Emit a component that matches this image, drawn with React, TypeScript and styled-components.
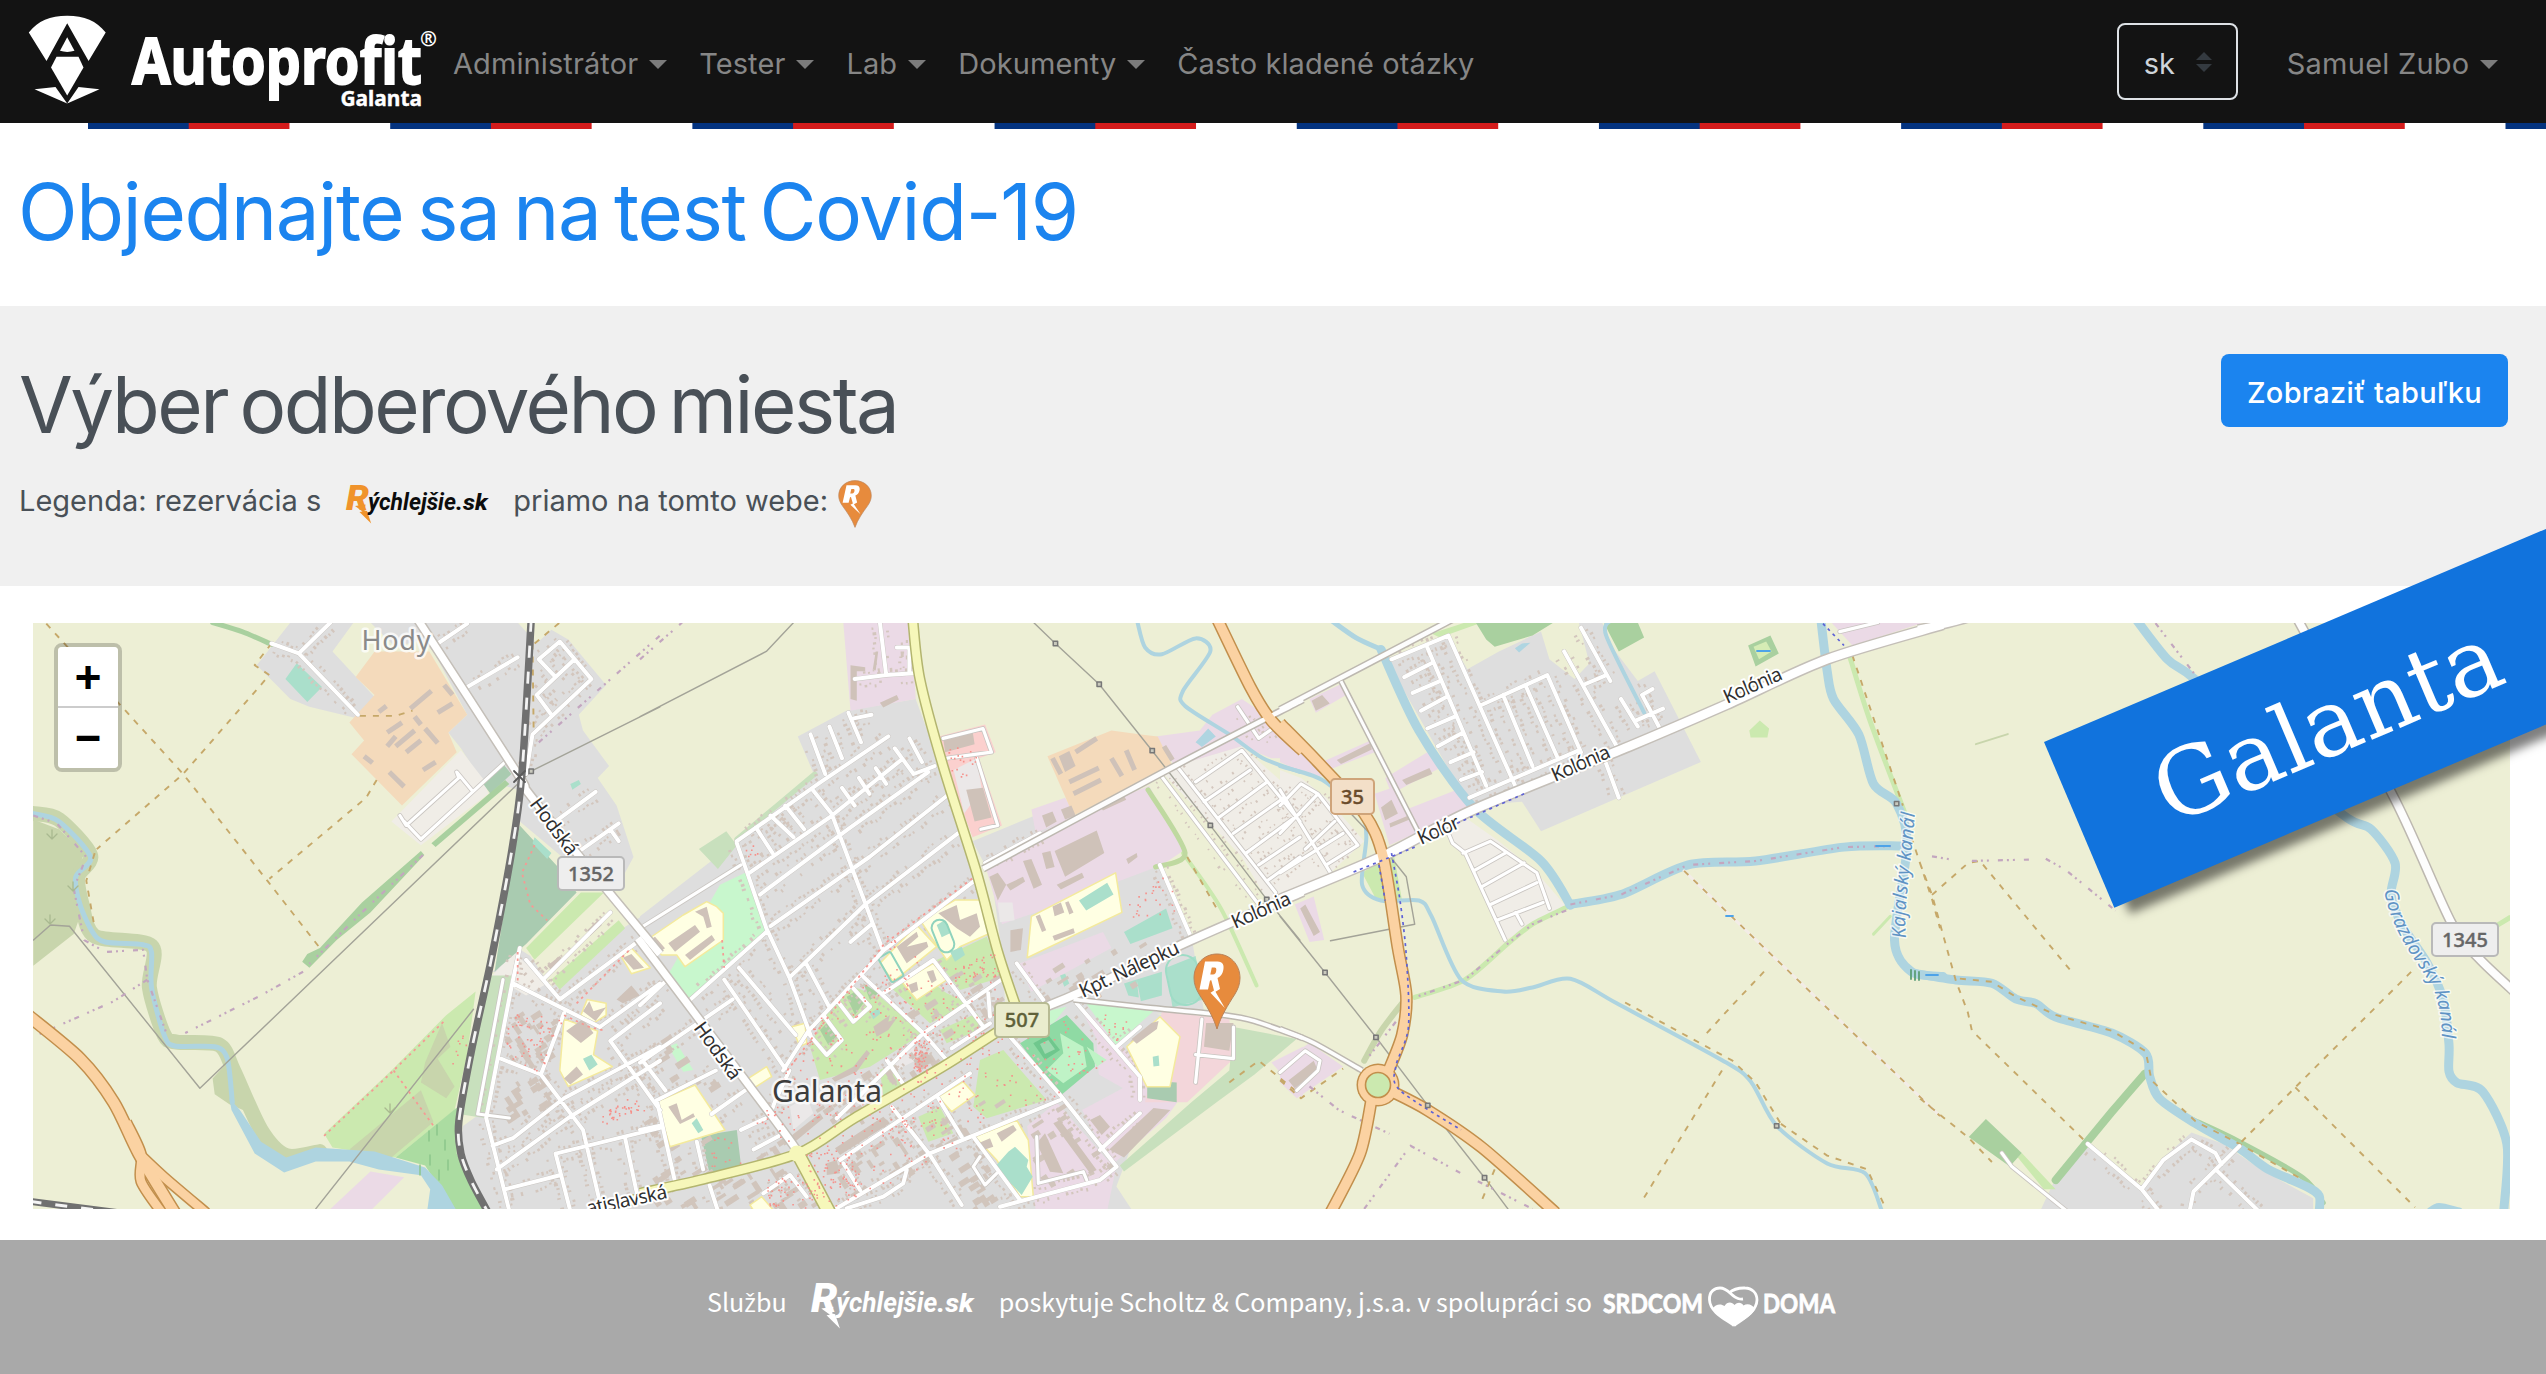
import React from "react";
import styled, { createGlobalStyle } from "styled-components";

/* ------------------------------------------------------------------ */
/* Map geometry: each survey sheet has its own origin and scale        */
/* ------------------------------------------------------------------ */

type Sheet = "A" | "B" | "C" | "D" | "E";
type Pt = [number, number];
type Shape = [Sheet, string];

const SHEETS: Record<Sheet, [number, number, number, number]> = {
  A: [0, 600, 2.3758, 2.529],
  B: [640, 600, 2.3758, 2.529],
  C: [1280, 600, 2.3758, 2.529],
  D: [1920, 510, 2.5048, 2.2085],
  E: [640, 900, 3, 3],
};

const pts = ([sheet, data]: Shape): Pt[] => {
  const [ox, oy, sx, sy] = SHEETS[sheet];
  return data.split(" ").map((pair) => {
    const [x, y] = pair.split(",").map(Number);
    return [ox + x / sx, oy + y / sy] as Pt;
  });
};

const f = (n: number) => n.toFixed(1);
const poly = (s: Shape) => "M" + pts(s).map(([x, y]) => `${f(x)} ${f(y)}`).join("L");
const area = (s: Shape) => poly(s) + "Z";

const curve = (s: Shape) => {
  const p = pts(s);
  let d = `M${f(p[0][0])} ${f(p[0][1])}`;
  for (let i = 0; i < p.length - 1; i++) {
    const a = p[i - 1] ?? p[i];
    const b = p[i];
    const c = p[i + 1];
    const e = p[i + 2] ?? c;
    d += `C${f(b[0] + (c[0] - a[0]) / 7)} ${f(b[1] + (c[1] - a[1]) / 7)} ${f(c[0] - (e[0] - b[0]) / 7)} ${f(
      c[1] - (e[1] - b[1]) / 7,
    )} ${f(c[0])} ${f(c[1])}`;
  }
  return d;
};

const random = (seed: number) => () => {
  seed = (seed * 1664525 + 1013904223) % 4294967296;
  return seed / 4294967296;
};

/* small houses on both sides of a street */
const housesAlong = (streets: Shape[], size: number, skip: number) => {
  const rnd = random(7);
  let d = "";
  streets.forEach((street) => {
    const p = pts(street);
    for (let i = 0; i < p.length - 1; i++) {
      const dx = p[i + 1][0] - p[i][0];
      const dy = p[i + 1][1] - p[i][1];
      const len = Math.hypot(dx, dy);
      const ux = dx / len;
      const uy = dy / len;
      for (let t = 4; t < len - 3; t += 5) {
        [-1, 1].forEach((side) => {
          if (rnd() < skip) return;
          const off = side * (4.5 + rnd() * 4);
          const w = size * (1.7 + rnd() * 1.4);
          const h = size * (1.8 + rnd() * 2.6);
          const x = p[i][0] + ux * t - uy * off;
          const y = p[i][1] + uy * t + ux * off;
          d += `M${f(x)} ${f(y)}l${f(ux * w)} ${f(uy * w)}l${f(-uy * h)} ${f(ux * h)}l${f(-ux * w)} ${f(-uy * w)}z`;
        });
      }
    }
  });
  return d;
};

const inside = ([x, y]: Pt, ring: Pt[]) => {
  let hit = false;
  for (let i = 0, j = ring.length - 1; i < ring.length; j = i++) {
    const [xi, yi] = ring[i];
    const [xj, yj] = ring[j];
    if (yi > y !== yj > y && x < ((xj - xi) * (y - yi)) / (yj - yi) + xi) hit = !hit;
  }
  return hit;
};

/* random marks spread over an area */
const scatter = (s: Shape, count: number, seed: number, mark: (x: number, y: number, r: () => number) => string) => {
  const ring = pts(s);
  const rnd = random(seed);
  const xs = ring.map((q) => q[0]);
  const ys = ring.map((q) => q[1]);
  const x0 = Math.min(...xs);
  const y0 = Math.min(...ys);
  const w = Math.max(...xs) - x0;
  const h = Math.max(...ys) - y0;
  let d = "";
  for (let i = 0; i < count; i++) {
    const x = x0 + rnd() * w;
    const y = y0 + rnd() * h;
    if (inside([x, y], ring)) d += mark(x, y, rnd);
  }
  return d;
};

const dot = (x: number, y: number) => `M${f(x)} ${f(y)}h1.6v1.6h-1.6z`;
const block = (x: number, y: number, r: () => number) => {
  const w = 5 + r() * 10;
  const h = 3 + r() * 4;
  const flip = r() < 0.35;
  const c = flip ? 0.55 : 0.84;
  const s = flip ? 0.84 : -0.54;
  return `M${f(x)} ${f(y)}l${f(w * c)} ${f(w * s)}l${f(-h * s)} ${f(h * c)}l${f(-w * c)} ${f(-w * s)}z`;
};

const RESIDENTIAL: Shape[] = [
  ["A", "610,165 690,57 840,57 790,130 890,245 850,300 735,270 690,250"],
  ["A", "880,57 1230,57 1275,110 1310,75 1350,100 1440,215 1375,290 1385,330 1447,420 1420,450 1465,520 1505,650 1480,700 1370,680 1235,560 1230,480 1140,450 1095,375 1065,335 1110,290 1030,130 1000,100 940,120"],
  ["A", "1170,940 1230,880 1260,900 1310,980 1480,830 1568,770 1575,1545 1160,1545 1090,1400 1100,1330 1140,1300 1150,1250 1210,950"],
  ["B", "0,860 0,800 230,610 415,445 375,345 490,280 655,250 720,440 800,700 860,900 870,1060 1170,1545 0,1545"],
  ["B", "790,610 950,540 1000,530 1030,560 820,670"],
  ["B", "840,740 1150,680 1240,670 1310,850 1340,1040 1000,1060 880,1040"],
  ["B", "870,1080 1050,1010 1290,1060 1300,1250 1200,1290 1110,1545 500,1545"],
  ["C", "255,155 400,90 445,175 520,130 620,80 640,150 700,200 735,160 710,57 765,57 790,120 850,205 890,180 1000,410 620,585 575,510 450,520"],
  ["D", "340,1475 430,1400 555,1500 610,1430 680,1375 760,1400 860,1460 985,1520 985,1550 300,1550"],
];

const AREAS: [string, Shape[]][] = [
  ["#f0ede7", [
    ["C", "400,600 410,560 440,550 520,610 610,690 680,775 535,860 440,650"],
    ["B", "1235,430 1430,370 1568,500 1575,740 1490,760 1430,650"],
    ["C", "0,430 50,450 110,500 200,610 120,690 0,750"],
    ["A", "930,560 1095,380 1150,455 1160,490 1000,620"],
    ["A", "1170,950 1220,890 1300,970 1250,1000"],
  ]],
  ["#ebdae6", [
    ["B", "483,57 645,57 655,250 500,280"],
    ["B", "820,670 1000,560 1210,470 1290,635 1240,670 940,790 860,820"],
    ["B", "930,530 1010,500 1035,545 940,590"],
    ["B", "1225,345 1330,330 1360,290 1430,250 1568,350 1575,400 1500,400 1430,370 1270,420"],
    ["B", "900,920 1100,840 1120,880 930,990"],
    ["C", "0,340 60,380 130,450 60,440 0,410"],
    ["C", "70,250 150,210 165,235 85,285"],
    ["C", "100,410 215,355 225,385 115,430"],
    ["C", "250,450 350,385 380,425 265,490"],
    ["C", "225,490 280,470 300,530 420,480 465,520 260,620"],
    ["C", "35,770 80,750 105,860 70,865"],
    ["B", "1040,1020 1130,1110 1200,1200 1190,1260 1090,1200 1085,1110"],
    ["B", "920,1330 990,1270 1130,1440 1110,1545 940,1545"],
    ["B", "1050,1290 1190,1210 1290,1250 1250,1310 1120,1430"],
    ["B", "1500,1170 1575,1130 1575,1260"],
    ["C", "0,1170 70,1120 150,1180 40,1260 0,1220"],
    ["C", "1310,57 1530,57 1360,115"],
    ["A", "780,1545 880,1445 960,1460 880,1545"],
  ]],
  ["#f3d6da", [["B", "1240,1040 1400,1060 1410,1160 1300,1270 1200,1270"]]],
  ["#fbd0ce", [["B", "710,345 820,315 845,385 805,400 860,570 790,600 730,430"]]],
  ["#ebe8e8", [
    ["B", "745,430 800,400 812,480 770,540"],
    ["B", "850,765 885,765 890,810 855,815"],
    ["E", "750,480 820,440 830,480 770,510"],
    ["E", "450,620 500,590 520,640 460,690"],
  ]],
  ["#f4dabb", [
    ["A", "890,130 1020,130 1110,290 1065,335 1085,385 955,520 835,390 865,355 830,310 890,240 845,195"],
    ["B", "968,395 1120,330 1190,340 1230,345 1265,420 1030,545"],
  ]],
  ["#c8d5ac", [
    ["A", "79,555 140,580 200,640 180,700 190,800 175,845 79,925"],
    ["A", "505,1210 540,1170 575,1220 600,1300 545,1275 510,1250"],
  ]],
  ["#cbe9af", [
    ["A", "1250,880 1380,740 1435,740 1270,910"],
    ["A", "1310,960 1470,810 1485,830 1330,985"],
    ["A", "770,1350 930,1190 1060,1050 1130,990 1110,1150 1080,1290 940,1410 790,1385"],
    ["C", "1115,330 1140,305 1162,325 1158,348 1118,348"],
    ["C", "195,690 270,640 290,760 230,760"],
    ["C", "360,85 440,57 480,57 380,95"],
    ["D", "245,1430 255,1420 340,1500 310,1500"],
    ["E", "550,350 640,260 720,290 850,400 690,500 540,540 510,440"],
    ["E", "750,260 840,220 920,280 990,310 870,370"],
    ["E", "890,180 1040,110 1090,230 960,270"],
    ["E", "900,390 1010,340 1040,380 920,430"],
    ["E", "1020,480 1090,450 1220,600 1040,655 1000,620"],
    ["E", "835,650 900,620 940,700 865,725"],
    ["E", "720,510 760,490 790,550 730,590"],
  ]],
  ["#c8f7cd", [
    ["B", "60,960 190,720 250,690 303,830 120,1010"],
    ["B", "1060,1020 1220,1040 1130,1125"],
    ["E", "85,440 110,430 160,510 130,515"],
    ["E", "1190,340 1280,320 1240,370 1190,380"],
  ]],
  ["#abdca1", [["A", "940,1410 1090,1280 1085,1400 1150,1545 1080,1545 1010,1430"]]],
  ["#c8d5ac", [
    ["A", "830,1390 1000,1240 1030,1320 930,1410"],
    ["A", "1010,1170 1050,1070 1070,1130 1040,1160 1080,1230 1060,1260 1000,1220"],
  ]],
  ["#c8e0bd", [
    ["A", "1150,950 1215,950 1150,1310 1090,1300"],
    ["B", "1410,1080 1560,1110 1460,1200 1370,1270 1150,1445 1140,1430 1310,1270 1400,1190"],
    ["B", "140,630 205,585 230,620 185,680"],
  ]],
  ["#a9cbb0", [
    ["A", "1235,570 1330,680 1370,740 1250,870 1185,930 1175,940 1210,700"],
    ["A", "1145,460 1195,415 1215,440 1165,490"],
    ["B", "145,1355 230,1340 240,1430 165,1450"],
    ["B", "1205,1215 1275,1220 1275,1270 1205,1260"],
  ]],
  ["#a9d09f", [
    ["A", "735,930 718,915 730,895 760,880 860,765 1000,635 1008,645 880,790 800,860"],
    ["A", "1025,615 1200,455 1210,465 1035,625"],
    ["C", "465,57 650,57 600,90 510,118 490,100"],
    ["C", "770,57 850,57 865,95 805,130 780,80"],
    ["C", "1112,115 1165,90 1185,135 1130,168"],
    ["D", "122,1385 165,1345 255,1420 225,1450"],
    ["E", "620,290 645,275 670,310 645,345"],
    ["E", "540,390 560,370 590,410 565,435"],
    ["E", "670,250 715,280 690,300"],
  ]],
  ["#d5ecb5", [["C", "1125,118 1155,105 1168,130 1138,150"]]],
  ["#8fdaa4", [["E", "1140,430 1280,345 1360,430 1365,500 1260,588"]]],
  ["#bff3c6", [
    ["E", "1260,400 1330,440 1340,500 1270,550 1220,510 1270,460"],
    ["E", "1340,440 1400,480 1370,500"],
  ]],
  ["#6fc78d", [["E", "1180,430 1225,405 1260,450 1215,480"]]],
  ["#9fdab0", [["E", "1200,432 1225,420 1245,448 1215,462"]]],
  ["#aadfcb", [
    ["A", "705,160 765,220 730,258 678,200"],
    ["A", "1270,600 1310,640 1300,655 1265,615"],
    ["A", "1355,465 1375,455 1380,465 1360,480"],
    ["B", "1150,840 1250,780 1265,830 1165,870"],
    ["B", "1250,930 1320,900 1340,1010 1265,1030"],
    ["B", "1180,960 1240,940 1240,1000 1190,1015"],
    ["B", "1150,970 1180,960 1185,1005 1160,1000"],
    ["B", "998,950 1010,945 1020,970 1008,978"],
    ["E", "690,340 715,325 722,340 700,358"],
  ]],
  ["#afd5e1", [
    ["B", "1320,360 1350,325 1368,345 1335,372"],
    ["C", "558,122 575,110 595,108 568,133"],
  ]],
];

const SCHOOLS: Shape[] = [
  ["E", "20,120 130,45 200,5 230,20 250,40 250,120 135,200 110,165 65,165"],
  ["E", "840,60 945,0 1020,0 1050,100 960,140 920,180 880,120"],
  ["E", "720,190 830,75 890,140 760,245"],
  ["E", "785,245 880,190 920,240 830,300"],
  ["E", "1460,440 1560,350 1620,410 1590,560 1520,560"],
  ["E", "1005,710 1130,660 1165,720 1180,890 1140,890 1070,780"],
  ["E", "50,605 165,555 255,690 90,740"],
  ["E", "455,380 495,370 500,430 480,440"],
  ["E", "325,535 380,500 395,530 340,565"],
  ["E", "895,590 970,545 1005,585 935,635"],
  ["E", "330,915 365,890 400,930 340,930"],
  ["B", "930,800 1130,690 1145,790 920,905"],
  ["A", "1340,1060 1420,1090 1410,1150 1455,1180 1350,1230 1330,1190"],
  ["A", "1380,1050 1395,1010 1440,1020 1440,1050 1410,1070"],
  ["A", "1475,900 1500,880 1545,930 1500,945"],
];

const PITCHES: Shape[] = [
  ["B", "1043,760 1110,715 1125,745 1060,785"],
  ["E", "1065,800 1105,755 1125,740 1165,780 1160,800 1178,830 1145,885"],
  ["E", "890,75 915,60 930,100 905,112"],
  ["E", "930,155 965,140 975,165 945,185"],
  ["E", "155,670 170,655 190,690 175,700"],
  ["A", "1385,1160 1405,1150 1420,1175 1400,1190"],
  ["B", "1218,1155 1232,1152 1234,1178 1220,1180"],
];

const BUILDINGS: Shape[] = [
  ["B", "720,350 790,330 795,365 725,385"],
  ["B", "775,480 815,475 835,550 795,560"],
  ["B", "985,635 1085,583 1103,640 1010,700"],
  ["B", "910,660 930,655 955,720 935,730"],
  ["B", "955,640 975,635 985,675 965,680"],
  ["B", "830,700 850,690 870,720 850,760"],
  ["B", "870,720 910,700 915,712 880,735"],
  ["B", "990,720 1050,690 1055,702 1000,732"],
  ["B", "1155,655 1180,640 1182,650 1160,668"],
  ["B", "955,545 980,535 990,560 965,575"],
  ["B", "1000,530 1025,520 1035,545 1010,555"],
  ["B", "1090,520 1150,495 1155,505 1100,532"],
  ["B", "560,130 553,175 560,178 566,130"],
  ["B", "500,165 535,170 535,180 515,180 515,255 500,250"],
  ["B", "570,260 610,240 615,252 578,272"],
  ["B", "995,395 1020,382 1035,420 1010,435"],
  ["B", "1115,1390 1220,1285 1260,1290 1150,1410"],
  ["B", "880,835 910,830 905,885 880,890"],
  ["B", "1345,1070 1410,1070 1400,1140 1340,1130"],
  ["B", "980,775 1000,765 1008,790 985,800"],
  ["B", "940,800 950,795 965,835 955,840"],
  ["B", "1010,765 1018,762 1030,790 1020,795"],
  ["B", "980,850 1030,830 1033,842 985,862"],
  ["B", "1168,1110 1215,1070 1232,1065 1228,1085 1180,1122"],
  ["E", "85,130 165,75 180,95 105,155"],
  ["E", "165,35 200,20 215,80 200,85 190,50"],
  ["E", "135,165 215,105 225,120 150,180"],
  ["E", "30,120 45,110 75,145 60,155"],
  ["E", "770,140 830,95 835,110 800,140 860,125 865,140 800,190"],
  ["E", "895,40 950,15 960,60 1010,40 1020,80 990,110 950,85 920,60"],
  ["E", "860,215 880,210 890,240 875,250"],
  ["E", "805,255 830,245 835,270 815,280"],
  ["E", "700,380 750,345 745,365 770,355 745,390 710,410"],
  ["E", "585,745 730,650 750,670 600,765"],
  ["E", "450,710 540,640 550,655 465,725"],
  ["E", "560,790 590,780 600,820 560,825"],
  ["E", "1015,730 1050,715 1060,740 1030,750"],
  ["E", "1070,700 1120,675 1130,690 1085,725"],
  ["E", "1190,730 1215,700 1270,820 1230,815"],
  ["E", "1240,670 1260,660 1370,810 1350,820"],
  ["E", "1350,660 1380,645 1410,680 1385,705"],
  ["E", "85,620 110,610 125,660 160,640 165,650 120,672"],
  ["E", "820,480 860,455 880,485 835,510"],
  ["E", "575,535 640,500 680,450 690,460 650,515 585,545"],
  ["C", "75,255 100,240 118,262 85,280"],
  ["C", "135,405 215,362 218,378 145,415"],
  ["C", "290,455 355,425 362,440 300,468"],
  ["C", "240,525 265,505 280,540 250,557"],
  ["C", "260,565 305,545 308,555 262,575"],
  ["C", "48,780 60,770 95,840 80,850"],
  ["C", "20,1215 80,1165 90,1190 35,1235"],
  ["A", "1345,1090 1385,1060 1410,1095 1380,1120"],
  ["A", "1340,1210 1370,1180 1385,1200 1355,1225"],
  ["A", "1385,1040 1400,1015 1410,1040 1440,1030 1415,1065"],
  ["A", "1465,1010 1500,975 1520,1000 1480,1020"],
  ["A", "1480,905 1500,895 1530,930 1505,935"],
  ["A", "1300,925 1330,900 1340,912 1312,938"],
  ["A", "1395,835 1420,810 1430,822 1402,850"],
];

const SHEDS: Shape[] = [
  ["A", "920,335 955,310"], ["A", "940,370 985,330"], ["A", "965,385 1000,355"], ["A", "975,275 1025,230"],
  ["A", "985,295 1000,315"], ["A", "1010,325 1040,362"], ["A", "1040,285 1075,262"], ["A", "865,395 885,412"],
  ["A", "925,435 960,472"], ["A", "1055,215 1075,240"], ["A", "1005,430 1035,410"], ["A", "900,283 918,268"],
  ["A", "920,370 940,345"], ["B", "1035,385 1085,350"], ["B", "1020,460 1090,425"], ["B", "1120,400 1145,445"],
  ["B", "1155,380 1175,430"], ["B", "1030,490 1095,455"], ["B", "980,400 1000,440"], ["B", "1245,370 1265,405"],
];

const STRIPS: [string, number, Shape][] = [
  ["#c8d5ac", 15, ["A", "79,540 140,555 215,645 185,700 195,770 225,850 360,875 355,980 390,1100 420,1118 520,1125 555,1190 620,1340 680,1405 760,1395"]],
  ["#a9d09f", 5, ["A", "505,57 575,80 645,112"]],
  ["#c8e0bd", 5, ["B", "230,605 415,440"]],
  ["#cbe9af", 4, ["B", "1290,640 1380,780 1465,975"]],
  ["#bfd9a0", 5, ["B", "1207,480 1295,640 1225,675"]],
  ["#cbe9af", 5, ["C", "680,778 600,820 540,870 440,960 320,1005"]],
  ["#c8d5ac", 6, ["C", "290,1020 240,1090 200,1165"]],
  ["#cbe9af", 5, ["C", "1350,130 1400,300 1485,540"]],
  ["#cbe9af", 3, ["C", "1410,845 1450,800"]],
  ["#a9d09f", 8, ["D", "563,1245 480,1330 340,1480"]],
  ["#a9d09f", 5, ["D", "680,1345 800,1395 960,1475 1010,1530"]],
  ["#c8d5ac", 2, ["D", "140,517 220,495"]],
  ["#cbe9af", 5, ["D", "1440,920 1478,900"]],
];

const WATER: [number, Shape][] = [
  [5, ["A", "79,540 140,560 215,650 180,700 190,770 220,840 250,865 340,872 360,890 360,980 390,1100 415,1128 510,1130 540,1160 552,1270"]],
  [4, ["B", "1182,57 1200,120 1240,137 1320,97 1355,130 1290,230 1295,268 1400,340 1480,400 1568,435"]],
  [4, ["C", "0,420 100,455 190,540 205,600 195,720 240,760 330,760 360,800 430,960 530,990 600,980 690,958 800,1020 1060,1170 1120,1220 1180,1330 1300,1425 1390,1450 1430,1545"]],
  [5, ["C", "120,50 180,95 240,125"]],
  [9, ["C", "240,125 330,330 460,525 620,660 690,772"]],
  [9, ["C", "688,770 810,745 970,670 1130,660 1340,625 1475,622"]],
  [9, ["C", "1285,50 1300,180 1315,250 1375,340 1410,465 1465,515 1490,620 1460,860 1500,940 1575,952"]],
  [9, ["D", "-10,1024 90,1038 180,1045 240,1080 290,1090 340,1120 480,1155 565,1200 575,1250 600,1300 690,1355 800,1410 870,1455 970,1495 1000,1515 1000,1550"]],
  [9, ["D", "540,240 620,330 690,375 900,560 1070,680 1130,705 1190,780 1180,850 1210,920 1270,1000 1310,1080 1325,1180 1325,1240 1345,1265 1410,1285 1470,1400 1462,1550"]],
  [4, ["C", "788,50 775,90 865,285"]],
  [7, ["D", "1275,1550 1300,1538 1350,1548"]],
];

const STREETS: Shape[] = [
  ["A", "645,110 710,135 850,290"], ["A", "710,135 785,57"], ["A", "1110,220 1230,145"], ["A", "1040,110 1110,60"],
  ["A", "1280,150 1330,105 1405,200 1265,340 1250,440"], ["A", "1275,240 1365,150"], ["A", "1280,150 1320,195"],
  ["A", "1310,290 1275,240"], ["A", "1320,560 1415,485"], ["A", "1370,640 1470,565"], ["A", "1450,580 1470,610"],
  ["A", "1250,910 1290,960 1450,790"], ["A", "1220,970 1425,1080"], ["A", "1235,880 1215,980 1155,1310 1210,1545"],
  ["A", "1290,960 1330,1010 1520,860"], ["A", "1425,1080 1568,970"], ["A", "1340,1045 1285,1200"],
  ["A", "1190,1160 1285,1200 1385,1340 1430,1545"], ["A", "1170,1380 1220,1360 1340,1260 1568,1130"],
  ["A", "1180,1440 1350,1310 1568,1165"], ["A", "1320,1400 1568,1335"], ["A", "1320,1400 1355,1545"],
  ["A", "1200,1490 1330,1455"], ["A", "1485,1360 1515,1510"], ["A", "1450,1115 1568,1020"], ["A", "1450,1115 1568,1290"],
  ["B", "230,615 255,690 300,830 355,955 405,1100"], ["B", "410,480 455,540 575,880"], ["B", "230,610 430,460 590,345"],
  ["B", "260,690 450,550 620,405"], ["B", "285,745 500,575 685,435"], ["B", "310,825 545,650 735,490"],
  ["B", "355,955 535,770 755,590"], ["B", "500,865 550,820"], ["B", "405,340 440,440"], ["B", "450,320 480,400"],
  ["B", "495,285 525,360"], ["B", "505,300 550,290"], ["B", "345,520 390,580"], ["B", "275,575 315,640"],
  ["B", "310,545 365,600"], ["B", "480,475 510,520"], ["B", "520,450 545,490"], ["B", "560,425 585,465"],
  ["B", "605,375 650,440 700,420"], ["B", "640,350 670,410"], ["B", "340,1190 400,1090 580,885 795,710"],
  ["B", "120,1010 300,840"], ["B", "200,960 345,1185"], ["B", "235,930 370,1100"], ["B", "395,920 450,1030"],
  ["B", "0,1170 220,1010"], ["B", "0,1025 60,965"], ["B", "10,1170 60,1240"], ["B", "40,1265 180,1190"],
  ["B", "40,1265 85,1480"], ["B", "165,1480 185,1545"], ["B", "170,1300 250,1240"], ["B", "270,1390 340,1350"],
  ["B", "240,1340 300,1310"], ["B", "310,1300 320,1270 355,1190"], ["B", "0,1340 45,1330"], ["B", "135,1370 150,1440"],
  ["E", "590,655 850,400 1090,235"], ["E", "670,230 850,400 920,480"], ["E", "730,280 880,180 1030,380"],
  ["E", "740,480 795,560"], ["E", "505,400 560,465 605,420 550,345"], ["E", "590,300 640,365 690,320 640,265"],
  ["E", "935,445 1050,370"], ["E", "600,780 990,520"], ["E", "755,620 870,765 965,915"], ["E", "895,595 965,710"],
  ["E", "590,925 870,760 1260,600"], ["E", "610,790 660,870"], ["E", "1110,410 1265,590 1430,800"],
  ["E", "1430,800 1380,840 1080,920"], ["E", "1130,190 1210,300"], ["E", "1310,310 1500,530 1500,600"],
  ["E", "1380,750 1500,640"], ["E", "370,880 450,825 500,890"], ["E", "800,810 790,850 730,890 620,925"],
  ["E", "1430,440 1500,380"], ["E", "1000,710 1140,900"], ["E", "1045,280 1050,350"],
  ["B", "1235,670 1310,855"], ["B", "820,665 950,590"], ["B", "570,57 585,190 650,185"],
  ["B", "510,200 585,190"], ["B", "610,120 640,120 640,185"],
  ["C", "265,150 400,90 565,485"], ["C", "350,120 490,470"], ["C", "295,195 360,160"], ["C", "315,235 380,205"],
  ["C", "335,280 395,245"], ["C", "350,325 415,295"], ["C", "375,370 435,335"], ["C", "405,410 460,385"],
  ["C", "430,455 480,435"], ["C", "450,500 710,380"], ["C", "480,265 635,190 715,385"], ["C", "530,240 600,420"],
  ["C", "585,220 660,400"], ["C", "675,130 800,370"], ["C", "770,400 805,500"], ["C", "715,70 785,205"],
  ["C", "720,215 775,190"], ["C", "810,250 850,320"], ["C", "845,305 910,275"], ["C", "885,225 860,240 900,320"],
  ["D", "420,1400 555,1500 600,1550"], ["D", "555,1500 610,1435 680,1390 740,1420 755,1445"],
  ["D", "800,1405 685,1505 675,1550"], ["D", "745,1460 850,1550"],
];

const GARDENS: Shape[] = [
  ["B", "1235,440 1470,770"], ["B", "1275,420 1510,740"], ["B", "1320,460 1430,380 1568,560"],
  ["B", "1340,510 1450,430"], ["B", "1375,550 1490,460"], ["B", "1410,590 1530,500"], ["B", "1440,640 1568,540"],
  ["B", "1470,670 1568,600"], ["B", "1490,710 1568,650"], ["B", "1420,270 1470,350 1510,320"],
  ["C", "0,480 120,690"], ["C", "0,590 90,490 185,620 110,670"], ["C", "0,520 50,465 90,490"], ["C", "0,690 150,590"],
  ["C", "60,630 130,560"],
];

const LANES: Shape[] = [
  ["A", "950,545 965,570 1090,450 1085,435 1120,480"], ["A", "960,560 1000,605 1200,410"],
  ["C", "400,590 410,615 440,640 535,860"], ["C", "435,640 500,610 610,690 640,780"], ["C", "460,685 535,640"],
  ["C", "480,725 580,665"], ["C", "500,770 610,715"], ["C", "515,810 625,765"], ["C", "560,790 575,820"],
  ["D", "205,1420 230,1450 370,1550"], ["B", "720,350 815,325 835,385 730,400"], ["B", "800,400 850,570 810,580"],
  ["C", "1330,80 1420,57"], ["C", "0,1195 60,1140 95,1165 90,1190 40,1240"], ["B", "1320,1220 1335,1060"],
  ["B", "1320,1150 1410,1160 1410,1080"], ["E", "1195,850 1330,815 1340,840"], ["E", "1190,710 1195,850"],
  ["E", "1020,770 1000,800 1035,855 1070,820"], ["A", "1195,960 1135,1300 1210,1310"], ["B", "0,830 240,670"],
];

const ROADS: [string, string, number, Shape][] = [
  ["#fdfdfd", "#bdb8b0", 6, ["B", "815,680 1270,420 1575,252"]],
  ["#fdfdfd", "#bdb8b0", 6, ["C", "0,277 390,60 410,48"]],
  ["#fdfdfd", "#bdb8b0", 4.5, ["C", "145,205 330,590"]],
  ["#fdfdfd", "#bdb8b0", 5, ["B", "1030,1010 1200,1030 1390,1050 1460,1065 1575,1108"]],
  ["#fdfdfd", "#bdb8b0", 5, ["C", "0,1085 80,1120 195,1190"]],
  ["#fdfdfd", "#bdb8b0", 9, ["D", "945,240 1190,640 1330,910 1400,990 1490,1065"]],
  ["#ffffff", "#c4bfb8", 8.5, ["A", "990,45 1230,440 1250,480 1370,640 1568,895"]],
  ["#ffffff", "#c4bfb8", 8.5, ["B", "-5,855 310,1300 375,1395"]],
  ["#ffffff", "#c4bfb8", 9, ["B", "960,1030 1050,990 1310,860 1575,738"]],
  ["#ffffff", "#c4bfb8", 10, ["C", "0,757 240,650 460,530 830,370 1060,265 1300,150 1575,62"]],
  ["#ffffff", "#c4bfb8", 9, ["D", "-5,264 60,252 120,238"]],
  ["#f6f7ba", "#b3b56f", 9.5, ["B", "648,50 665,200 720,420 800,690 850,890 897,1040"]],
  ["#f6f7ba", "#b3b56f", 9.5, ["B", "895,1060 720,1180 510,1310 375,1400 150,1465 0,1500"]],
  ["#f6f7ba", "#b3b56f", 9.5, ["A", "1575,1498 1400,1545"]],
  ["#f6f7ba", "#b3b56f", 13, ["B", "375,1400 400,1450 450,1550"]],
  ["#fbd2a2", "#c28f4c", 10, ["A", "300,1320 335,1400 335,1470 385,1550"]],
  ["#fbd2a2", "#c28f4c", 10, ["A", "330,1400 390,1460 490,1550"]],
  ["#fbd2a2", "#c28f4c", 12, ["A", "60,1045 190,1160 270,1270 330,1400 415,1550"]],
  ["#fbd2a2", "#c28f4c", 11, ["B", "1370,45 1450,220 1500,305 1575,382"]],
  ["#fbd2a2", "#c28f4c", 11, ["C", "0,312 90,410 200,540 245,650 280,880 300,1000 290,1100 258,1190"]],
  ["#fbd2a2", "#c28f4c", 11, ["C", "260,1240 350,1290 480,1385 655,1550"]],
  ["#fbd2a2", "#c28f4c", 11, ["C", "218,1260 190,1400 120,1550"]],
];

const TRACKS: Shape[] = [
  ["A", "110,60 435,440 635,710 760,880"], ["A", "645,110 605,165 640,190 435,440 230,630"],
  ["A", "895,455 870,500 640,705"], ["A", "855,293 940,293 980,280"], ["A", "1265,110 1268,340"],
  ["A", "225,640 205,710 225,830"], ["A", "1270,110 1330,57"],
  ["C", "1150,940 1070,1030 1010,1100"], ["C", "1050,1190 860,1520"],
  ["C", "1190,1325 1300,1405 1395,1440 1440,1540"], ["C", "820,1018 1075,1165 1130,1220 1190,1325"],
  ["C", "1360,140 1480,520"], ["C", "1500,600 1550,760 1568,830"], ["C", "510,1440 475,1530"],
  ["D", "0,780 30,850 90,1040 120,1110 130,1150 415,1395"], ["D", "30,850 120,780 150,775 380,1020"],
  ["D", "0,1300 120,1385 180,1440"], ["D", "1230,1020 940,1275 800,1400"], ["D", "940,1275 1240,1540"],
  ["D", "100,1035 180,1042 240,1075 340,1115 480,1150 565,1195 580,1260 690,1350 800,1400 960,1480"],
  ["B", "1400,1220 1470,1165 1568,1250"], ["B", "1300,650 1370,780"], ["C", "0,1215 50,1260 150,1185"],
];

const PALE_TRACKS: Shape[] = [["C", "960,685 1180,910 1568,1305"]];

const BORDERS: Shape[] = [
  ["A", "720,940 620,1000 440,1095"], ["A", "350,960 270,1015 79,1105"], ["A", "1280,360 1568,90"],
  ["B", "0,150 100,57"], ["C", "70,1230 140,1290 260,1350"], ["C", "200,1540 310,1380 430,1450"],
  ["C", "470,1470 600,1540"], ["C", "690,770 810,745 970,670 1130,660 1340,625 1475,622"],
  ["C", "680,785 600,820 540,870 440,960 320,1005 200,1170"], ["D", "30,765 80,772"], ["D", "130,775 275,772"],
  ["D", "315,770 365,795 490,885"], ["D", "590,250 690,365"],
  ["A", "79,545 135,565 205,650 175,730 200,860 250,890 340,885 350,960 400,1110"],
  ["A", "1005,645 860,790 735,920"],
];

const POWER: Shape[] = [
  ["A", "79,860 120,822 165,825 475,1235 1235,460 1262,433 1568,270"], ["A", "750,1540 1125,1035"],
  ["B", "0,295 300,130 365,57"], ["B", "935,57 987,110 1091,213 1217,381 1355,570 1489,757 1568,860"],
  ["C", "0,800 107,942 228,1106 351,1278 486,1461 545,1545"], ["C", "120,862 320,820 300,700 240,620 150,520"],
];

const PYLONS: Shape[] = [
  ["B", "987,110 1091,213 1217,381 1355,570 1489,757"],
  ["C", "107,942 228,1106 351,1278 486,1461"],
  ["A", "1262,433"],
  ["C", "1465,515 1180,1330"],
];

const FOOTPATHS: Shape[] = [
  ["C", "265,640 285,760 300,900 305,1080 275,1180 285,1240 430,1340"],
  ["C", "580,490 420,565"], ["C", "320,625 170,690"], ["C", "235,670 250,760"], ["C", "1290,60 1340,115"],
];

const RED_PATHS: Shape[] = [
  ["A", "770,1355 935,1190 1060,1060"], ["A", "935,1190 1030,1330"], ["A", "1230,890 1230,970"],
  ["A", "1270,620 1240,690 1260,770 1300,810"], ["A", "1340,1050 1400,1080 1440,1090"],
  ["B", "195,860 200,930"], ["B", "350,1190 580,870 795,700"], ["A", "1370,1020 1500,880"],
];

const CENTRE_BLOCKS: [Shape, number][] = [
  [["E", "590,790 850,640 980,560 1250,600 1000,690 860,760 590,915"], 130],
  [["E", "500,600 850,410 920,480 600,720"], 60],
  [["E", "0,440 60,420 300,590 440,760 0,840"], 60],
  [["E", "10,820 400,800 540,925 10,925"], 45],
  [["E", "1120,220 1500,130 1480,260 1240,300"], 38],
  [["E", "1150,680 1260,620 1430,800 1200,890"], 34],
  [["E", "880,780 1000,730 1120,900 990,925"], 40],
  [["A", "1220,1040 1330,1060 1280,1190 1190,1150"], 40],
  [["A", "1180,1180 1280,1210 1330,1260 1190,1340"], 30],
  [["E", "700,280 1080,190 1100,390 880,430"], 45],
];

const RED_DOTS: [Shape, number][] = [
  [["E", "450,430 640,260 900,200 1060,150 1100,390 1250,590 1000,680 600,780 400,640"], 520],
  [["E", "480,760 620,740 680,880 560,925"], 130],
  [["E", "820,420 870,420 860,520 820,510"], 70],
  [["E", "960,200 1070,150 1090,220 980,260"], 60],
  [["E", "1120,420 1280,345 1400,480 1260,588"], 80],
  [["E", "740,90 880,190 700,300"], 40],
  [["E", "1340,330 1490,350 1430,430"], 35],
  [["E", "600,780 870,620 960,740 700,880"], 80],
  [["E", "190,720 290,690 300,790 200,810"], 25],
  [["E", "350,620 480,600 460,720 330,760"], 25],
  [["A", "1215,1040 1340,1060 1290,1200 1190,1150"], 100],
  [["A", "1430,1300 1500,1250 1530,1290 1430,1330"], 70],
  [["A", "1090,1080 1120,1070 1100,1180 1070,1170"], 20],
  [["B", "1160,770 1250,690 1280,790 1170,800"], 45],
  [["B", "730,370 800,360 800,440 740,450"], 30],
  [["B", "240,620 290,620 270,670"], 12],
  [["E", "380,830 520,820 540,925 380,925"], 45],
];

const joined = (list: Shape[], draw: (s: Shape) => string) => list.map(draw).join("");

const RAILWAY: Shape = ["A", "1262,50 1240,440 1215,640 1165,920 1120,1140 1090,1320 1095,1400 1120,1470 1160,1550"];

const MapDrawing = () => (
  <svg width="2477" height="586" viewBox="33 623 2477 586" fill="none" strokeLinejoin="round" strokeLinecap="round">
    <rect x="33" y="623" width="2477" height="586" fill="#edefd5" />
    <path d={joined(RESIDENTIAL, area)} fill="#dedede" />
    {AREAS.map(([fill, list], i) => (
      <path key={i} d={joined(list, area)} fill={fill} />
    ))}
    {STRIPS.map(([stroke, w, s], i) => (
      <path key={i} d={curve(s)} stroke={stroke} strokeWidth={w} />
    ))}
    <path d={housesAlong(STREETS, 0.95, 0.25)} fill="#d3c6bd" />
    <path d={housesAlong(GARDENS, 0.7, 0.45)} fill="#d3c6bd" />
    {CENTRE_BLOCKS.map(([s, n], i) => (
      <path key={i} d={scatter(s, n, i * 31 + 5, block)} fill="#d1c5bc" />
    ))}
    <path d={joined(SCHOOLS, area)} fill="#ffffe3" stroke="#f4ea9c" strokeWidth="1.5" />
    <path d={joined(PITCHES, area)} fill="#aadfcb" />
    <path d={joined(BUILDINGS, area)} fill="#cfc2b9" />
    <path d={joined(SHEDS, poly)} stroke="#cfc2b9" strokeWidth="5" strokeLinecap="butt" />
    <rect x="935" y="919" width="16" height="34" rx="8" transform="rotate(-22 943 936)" stroke="#8fd3bd" strokeWidth="2" />
    <rect x="884" y="953" width="14" height="28" rx="2" transform="rotate(-30 891 967)" stroke="#8fd3bd" strokeWidth="2" />
    <rect x="1168" y="955" width="32" height="50" rx="15" transform="rotate(-12 1184 980)" stroke="#9edcc6" strokeWidth="2" />

    {WATER.map(([w, s], i) => (
      <path key={i} d={curve(s)} stroke="#aed4e0" strokeWidth={w} />
    ))}
    <path
      d={area(["A", "545,1260 570,1290 620,1370 680,1410 750,1385 890,1395 1010,1435 1050,1480 1085,1545 1015,1545 1022,1490 1000,1455 900,1440 830,1420 750,1420 675,1448 605,1400 550,1290"])}
      fill="#aed4e0"
    />

    <path d={joined(POWER, poly)} stroke="#a3a398" strokeWidth="1.4" />
    <path d={joined(PALE_TRACKS, poly)} stroke="#f3ece6" strokeWidth="3" />
    <path d={joined([...TRACKS, ...PALE_TRACKS], poly)} stroke="#c6a869" strokeWidth="1.9" strokeDasharray="6 7" strokeLinecap="butt" />
    <path d={joined(BORDERS, poly)} stroke="#c3a6bf" strokeWidth="2.2" strokeDasharray="5 4 2 4 2 9" strokeLinecap="butt" />

    <path d={joined([...STREETS, ...GARDENS, ...LANES], poly)} stroke="#c9c5c1" strokeWidth="4.8" />
    <path d={joined(STREETS, poly)} stroke="#ffffff" strokeWidth="4" />
    <path d={joined([...GARDENS, ...LANES], poly)} stroke="#ffffff" strokeWidth="3.2" />

    {ROADS.map(([, casing, w, s], i) => (
      <path key={i} d={curve(s)} stroke={casing} strokeWidth={w + 1.6} strokeLinecap="butt" />
    ))}
    <circle cx="1378" cy="1085" r="21.5" fill="#c28f4c" />
    {ROADS.map(([fill, , w, s], i) => (
      <path key={i} d={curve(s)} stroke={fill} strokeWidth={w - 1.4} strokeLinecap="butt" />
    ))}
    <circle cx="1378" cy="1085" r="20" fill="#fbd2a2" />
    <circle cx="1378" cy="1085" r="12.5" fill="#cbe9af" stroke="#c28f4c" strokeWidth="1.6" />
    <circle cx="797" cy="1153.500" r="8" fill="#f6f7ba" />

    <path d={joined(FOOTPATHS, curve)} stroke="#5d61d6" strokeWidth="1.7" strokeDasharray="3 4" strokeLinecap="butt" />
    <path d={joined(RED_PATHS, poly)} stroke="#f59a94" strokeWidth="1.8" strokeDasharray="2.500 4" strokeLinecap="butt" />
    {RED_DOTS.map(([s, n], i) => (
      <path key={i} d={scatter(s, n, i * 17 + 3, dot)} fill="#f5918b" />
    ))}

    <path d={curve(RAILWAY)} stroke="#707070" strokeWidth="7.500" strokeLinecap="butt" />
    <path d={curve(RAILWAY)} stroke="#f4f4f4" strokeWidth="2.800" strokeDasharray="12 14" strokeLinecap="butt" />
    <path d={poly(["A", "70,1521 300,1552"])} stroke="#707070" strokeWidth="7" />
    <path d={poly(["A", "70,1521 300,1552"])} stroke="#f4f4f4" strokeWidth="3" strokeDasharray="12 14" strokeLinecap="butt" />
    <path d="M514 771l11 11m0-11l-11 11" stroke="#5a5a5a" strokeWidth="1.8" />
    {PYLONS.flatMap(pts).map(([x, y], i) => (
      <rect key={i} x={x - 2.2} y={y - 2.2} width="4.400" height="4.400" fill="#c9c9bd" stroke="#777" strokeWidth="1.500" />
    ))}
    <path d="M1757 651h13M1876 846h14M1926 975h12M1726 916h7" stroke="#4da3e8" strokeWidth="1.8" />
    <path d="M1911 970v9m4-8v9m4-8v8" stroke="#5c9f78" strokeWidth="1.8" />
    <path d="M52 839v-9m-5 4l5 5 5-5M73 891v-9m-5 4l5 5 5-5M50 924v-9m-5 4l5 5 5-5M390 1113v-9m-5 4l5 5 5-5" stroke="#a9b990" strokeWidth="1.300" />
    <path d="M429 1131v10M437 1125v10M445 1140v10M430 1155v10M439 1170v10M448 1160v10M420 1165v10" stroke="#8cc58a" strokeWidth="1.5" />
    <MapLabels />
  </svg>
);

const PlaceName = styled.text`
  font-family: "Noto Sans", sans-serif;
  paint-order: stroke;
  stroke: rgba(255, 255, 255, 0.75);
  stroke-width: 5px;
`;

const StreetName = styled(PlaceName)`
  font-size: 19.500px;
  fill: #303030;
  stroke: #fff;
  stroke-width: 4px;
`;

const CanalName = styled(PlaceName)`
  font-size: 19px;
  font-style: italic;
  fill: #5f93c4;
  stroke: rgba(255, 255, 255, 0.7);
  stroke-width: 3px;
`;

const ShieldText = styled.text`
  font-family: "Noto Sans", sans-serif;
  font-size: 20px;
  font-weight: 500;
  text-anchor: middle;
`;

const STREET_NAMES: [string, number, number, number, number][] = [
  ["Hodská", 529, 804, 53, 66],
  ["Hodská", 693, 1028, 54, 66],
  ["Kpt. Nálepku", 1083, 998, -25, 108],
  ["Kolónia", 1235, 929, -24, 63],
  ["Kolór", 1421, 845, -24, 44],
  ["Kolónia", 1555, 782, -24, 62],
  ["Kolónia", 1727, 704, -24, 62],
  ["atislavská", 588, 1215, -12, 82],
];

const SHIELDS: [string, number, number, number, number, string, string, string][] = [
  ["1352", 558, 857, 66, 33, "#eeeeee", "#b9b9b9", "#666"],
  ["507", 995, 1003, 54, 34, "#eaeccd", "#b7ba93", "#5f6139"],
  ["35", 1331, 779, 43, 35, "#f3dfc8", "#cfa47a", "#6b4c2c"],
  ["1345", 2432, 923, 66, 33, "#eeeeee", "#b9b9b9", "#666"],
];

const MapLabels = () => (
  <g>
    <PlaceName x="361.500" y="649.500" fontSize="27" textLength="69" fill="#8a8a8a">Hody</PlaceName>
    <PlaceName x="772" y="1102" fontSize="30" textLength="110" fill="#3c3c3c">Galanta</PlaceName>
    {STREET_NAMES.map(([name, x, y, angle, len]) => (
      <StreetName key={`${x}`} transform={`translate(${x} ${y}) rotate(${angle})`} textLength={len}>
        {name}
      </StreetName>
    ))}
    <path id="kajal" d="M1906 938C1903 905 1911 870 1915 812" />
    <CanalName>
      <textPath href="#kajal" textLength="126">Kajalský kanál</textPath>
    </CanalName>
    <path id="goraz" d="M2384 890C2392 935 2418 962 2434 990C2442 1015 2442 1030 2442 1048" />
    <CanalName>
      <textPath href="#goraz" textLength="162">Gorazdovský kanál</textPath>
    </CanalName>
    {SHIELDS.map(([label, x, y, w, h, fill, stroke, color]) => (
      <g key={label}>
        <rect x={x} y={y} width={w} height={h} rx="4" fill={fill} stroke={stroke} strokeWidth="2" />
        <ShieldText x={x + w / 2} y={y + h / 2 + 7} fill={color} stroke={color} strokeWidth=".4">{label}</ShieldText>
      </g>
    ))}
  </g>
);

/* ------------------------------------------------------------------ */
/* Logos                                                               */
/* ------------------------------------------------------------------ */

const LogoSvg = styled.svg`
  display: block;
  overflow: visible;
`;

const LogoText = styled.text`
  font-family: "Noto Sans", "Open Sans", sans-serif;
  font-weight: 700;
`;

const AutoprofitLogo = () => (
  <LogoSvg width="410" height="100" viewBox="28 10 410 100" fill="#fff">
    <path d="M28.800 32.500C38 21 50 15.800 67.200 15.800S96.500 21 105.700 32.500L88.600 61 67.200 23.300 46.500 61Z" />
    <path d="M67.200 37.300L74.500 50.800C70 52.300 64.500 52.300 60 50.800Z" />
    <path d="M56.500 56.800H78.500L83.500 67.500 67.200 95.500 51 67.500Z" />
    <path d="M34.500 89.300L55.500 87 67.200 103.500 78.500 87 99.500 89.300 67.200 103.500Z" />
    <LogoText x="132" y="83.700" fontSize="64.500" textLength="290" lengthAdjust="spacingAndGlyphs" stroke="#fff" strokeWidth="1.800">Autoprofit</LogoText>
    <LogoText x="340.500" y="106.300" fontSize="21" textLength="81.500" lengthAdjust="spacingAndGlyphs" stroke="#fff" strokeWidth=".4">Galanta</LogoText>
    <LogoText x="420" y="45.500" fontSize="21" textLength="17" lengthAdjust="spacingAndGlyphs">®</LogoText>
  </LogoSvg>
);

const SpeedText = styled.text`
  font-family: Roboto, sans-serif;
  font-style: italic;
`;

const RychlejsieLogo = ({ width, accent, ink }: { width: number; accent: string; ink: string }) => (
  <LogoSvg width={width} height={(width * 42) / 142} viewBox="0 0 142 42">
    <SpeedText x="0" y="26.500" fontSize="35" fontWeight="900" fill={accent} textLength="23" lengthAdjust="spacingAndGlyphs">R</SpeedText>
    <path d="M9 23L19.500 21.500 18.500 27.500 21 28 25.200 40.500 13.500 29 16.500 28.500Z" fill={accent} />
    <SpeedText x="22" y="26.500" fontSize="23.500" fontWeight="700" fill={ink} textLength="88" lengthAdjust="spacingAndGlyphs">ýchlejšie</SpeedText>
    <SpeedText x="110" y="26.500" fontSize="22.500" fontWeight="800" fill={ink} textLength="31.500" lengthAdjust="spacingAndGlyphs">.sk</SpeedText>
  </LogoSvg>
);

const PinIcon = ({ width, height }: { width: number; height: number }) => (
  <svg width={width} height={height} viewBox="0 0 48 77" preserveAspectRatio="none">
    <path
      d="M24 1C11 1 1 11.500 1 25C1 31 3 36 6 41C13 52 20 63 24 76C28 63 35 52 42 41C45 36 47 31 47 25C47 11.500 37 1 24 1Z"
      fill="#e78b3d"
      stroke="#b9835a"
      strokeWidth="1"
    />
    <path
      d="M12 8.500H24.500C30 8.500 31.300 12.500 30.300 17C29.600 21 27.500 23.800 24.500 25L27 36 22.500 38.800 31.800 55 17.500 39.800 21 37.500 18.300 27.300 17 27.500 15 36.500H6.500ZM18.800 14.500L17.300 21.500H20C22 21.500 22.800 20 23.200 18C23.600 15.500 23 14.500 21.500 14.500Z"
      fill="#fff"
      fillRule="evenodd"
    />
  </svg>
);

const CaringText = styled.text`
  font-family: Lato, sans-serif;
  font-weight: 700;
  font-size: 27px;
  stroke: #fff;
  stroke-width: 0.8px;
`;

const SrdcomLogo = () => (
  <LogoSvg width="233" height="42" viewBox="1602 1286 233 42" fill="#fff">
    <CaringText x="1602" y="1313" textLength="100" lengthAdjust="spacingAndGlyphs">SRDCOM</CaringText>
    <path
      d="M1733 1325.500C1724 1319 1709 1312 1708.500 1300C1708 1291 1714 1288 1719 1288C1727 1288 1730 1296 1737 1298.500C1739 1299.200 1740 1299.300 1742 1299"
      fill="none"
      stroke="#fff"
      strokeWidth="2.800"
    />
    <path
      d="M1728 1293C1733 1288.500 1738 1287.800 1744 1288C1751 1288 1756 1293 1756 1300C1755.500 1312 1742 1319 1733 1325.500"
      fill="none"
      stroke="#fff"
      strokeWidth="2.800"
    />
    <path d="M1711 1309C1715 1303.500 1720 1303.500 1723.500 1306C1726 1301.500 1731 1301.500 1733.500 1305C1737 1301.500 1740.500 1302.500 1742.500 1305.500C1746 1303 1751 1304 1754.500 1309C1750 1317 1740 1321 1733 1326C1727 1321 1716 1317 1711 1309Z" />
    <CaringText x="1762" y="1313" textLength="72" lengthAdjust="spacingAndGlyphs">DOMA</CaringText>
  </LogoSvg>
);

/* ------------------------------------------------------------------ */
/* Page                                                                */
/* ------------------------------------------------------------------ */

const GlobalStyle = createGlobalStyle`
  * { box-sizing: border-box; }
  body { margin: 0; background: #fff; }
`;

const Page = styled.div`
  position: relative;
  display: flex;
  flex-direction: column;
  width: 100%;
  height: 1374px;
  overflow: hidden;
  background: #fff;
  color: #495057;
  font-family: Inter, "Noto Sans", sans-serif;
  font-size: 29px;
`;

const Navbar = styled.header`
  display: flex;
  align-items: center;
  flex: none;
  height: 123px;
  padding: 0 48px 0 28px;
  background: #131313;
`;

const Brand = styled.a`
  display: flex;
  margin-right: 15px;
  margin-bottom: 3px;
`;

const NavList = styled.nav`
  display: flex;
  flex: 1;
  gap: 32.500px;
  padding-top: 5px;
`;

const NavLink = styled.a`
  display: flex;
  align-items: center;
  line-height: 40px;
  letter-spacing: 0.100px;
  color: #868686;
  white-space: nowrap;
`;

const UserLink = styled(NavLink)`
  padding-top: 5px;
  margin-left: 49px;
  letter-spacing: 0.250px;
`;

const Caret = styled.span`
  margin: 1px 0 0 10.500px;
  border: 9px solid transparent;
  border-top-color: #7c7c7c;
  border-bottom: 0;
`;

const LanguageSelect = styled.div`
  display: flex;
  align-items: center;
  justify-content: space-between;
  width: 121px;
  height: 77px;
  padding: 3px 24px 0 25px;
  border: 2px solid #dee2e6;
  border-radius: 8px;
  color: #ced4da;
`;

const SortArrows = styled.span`
  display: flex;
  flex-direction: column;
  gap: 4px;
  margin-bottom: 3px;

  &::before,
  &::after {
    content: "";
    border: 8px solid transparent;
  }
  &::before {
    border-top: 0;
    border-bottom-color: #343a40;
  }
  &::after {
    border-bottom: 0;
    border-top-color: #343a40;
  }
`;

const TricolorLine = styled.div`
  flex: none;
  height: 6px;
  background: linear-gradient(90deg, #04337f 33.333%, #d41c1c 33.333% 66.667%, #fff 66.667%) 88px 0 / 302.200px 6px;
`;

const TitleBand = styled.section`
  flex: none;
  height: 177px;
  padding: 36px 18px 0;
`;

const Title = styled.h1<{ $tracking: number }>`
  margin: 0;
  font-size: 78px;
  font-weight: 400;
  line-height: 94px;
  letter-spacing: ${(p) => p.$tracking}px;
  word-spacing: -7px;
  white-space: nowrap;
`;

const PageTitle = styled(Title)`
  color: #1b84ef;
`;

const PickerBand = styled.section`
  display: flex;
  align-items: flex-start;
  justify-content: space-between;
  flex: none;
  height: 280px;
  padding: 48px 38px 0 19px;
  background: #f0f0f0;
`;

const PickerText = styled.div`
  padding-top: 4px;
`;

const Legend = styled.p`
  display: flex;
  align-items: center;
  height: 48px;
  margin: 24px 0 0;
  white-space: nowrap;
`;

const LegendLogo = styled.span`
  display: flex;
  margin: 8px 25px 0;
`;

const LegendPin = styled.span`
  display: flex;
  margin: 8px 0 0 10px;
`;

const TableButton = styled.button`
  width: 287px;
  height: 73px;
  padding: 3px 0 0;
  border: 0;
  border-radius: 8px;
  background: #1b84ef;
  color: #fff;
  font: 500 29px Inter, sans-serif;
  letter-spacing: 0.300px;
`;

const MapSection = styled.section`
  flex: none;
  padding: 37px 36px 31px 33px;
`;

const MapFrame = styled.div`
  position: relative;
  display: flex;
  height: 586px;
  overflow: hidden;
`;

const ZoomControl = styled.div`
  position: absolute;
  top: 20px;
  left: 21px;
  width: 68px;
  border: 4px solid rgba(0, 0, 0, 0.2);
  border-radius: 8px;
  background-clip: padding-box;
`;

const ZoomButton = styled.button`
  display: block;
  width: 60px;
  height: 60px;
  padding: 0 0 6px;
  border: 0;
  background: #fff;
  color: #000;
  font: 600 47px/54px Inter, sans-serif;

  &:first-child {
    height: 61px;
    border-bottom: 2px solid #ccc;
    border-radius: 4px 4px 0 0;
  }
  &:last-child {
    border-radius: 0 0 4px 4px;
  }
`;

const MapPin = styled.div`
  position: absolute;
  left: 1160px;
  top: 330px;
`;

const CityRibbon = styled.div`
  position: absolute;
  left: 2044px;
  top: 742px;
  width: 700px;
  height: 180px;
  padding: 4px 0 0 84px;
  background: #1173dd;
  box-shadow: 12px 12px 10px rgba(0, 0, 0, 0.5);
  color: #fff;
  font: 93px/180px "DejaVu Serif", serif;
  transform: rotate(-23deg);
  transform-origin: 0 0;
`;

const Footer = styled.footer`
  display: flex;
  align-items: center;
  justify-content: center;
  flex: 1;
  padding: 0 3px 12px 0;
  background: #a9a9a9;
  color: #fff;
  font: 25.100px "Noto Sans CJK SC", sans-serif;
  white-space: nowrap;
`;

const Caron = styled.span`
  font-family: "Open Sans", "Noto Sans", sans-serif;
  font-size: 25px;
`;

const FooterLogo = styled.span`
  display: flex;
  margin: 11px 25px 0 24px;
`;

const PartnerLogo = styled.span`
  display: flex;
  margin: 11px 0 0 11px;
`;

const MENU: [string, boolean][] = [
  ["Administrátor", true],
  ["Tester", true],
  ["Lab", true],
  ["Dokumenty", true],
  ["Často kladené otázky", false],
];

export default function App() {
  return (
    <Page>
      <GlobalStyle />
      <Navbar>
        <Brand>
          <AutoprofitLogo />
        </Brand>
        <NavList>
          {MENU.map(([label, dropdown]) => (
            <NavLink key={label}>
              {label}
              {dropdown && <Caret />}
            </NavLink>
          ))}
        </NavList>
        <LanguageSelect>
          sk
          <SortArrows />
        </LanguageSelect>
        <UserLink>
          Samuel Zubo
          <Caret />
        </UserLink>
      </Navbar>
      <TricolorLine />
      <TitleBand>
        <PageTitle $tracking={-1.3}>Objednajte sa na test Covid-19</PageTitle>
      </TitleBand>
      <PickerBand>
        <PickerText>
          <Title as="h2" $tracking={-2.5}>Výber odberového miesta</Title>
          <Legend>
            Legenda: rezervácia s
            <LegendLogo>
              <RychlejsieLogo width={142} accent="#f0932b" ink="#0c0c0c" />
            </LegendLogo>
            priamo na tomto webe:
            <LegendPin>
              <PinIcon width={34} height={48} />
            </LegendPin>
          </Legend>
        </PickerText>
        <TableButton>Zobraziť tabuľku</TableButton>
      </PickerBand>
      <MapSection>
        <MapFrame>
          <MapDrawing />
          <MapPin>
            <PinIcon width={48} height={77} />
          </MapPin>
          <ZoomControl>
            <ZoomButton>+</ZoomButton>
            <ZoomButton>−</ZoomButton>
          </ZoomControl>
        </MapFrame>
      </MapSection>
      <Footer>
        <span>
          Slu<Caron>ž</Caron>bu
        </span>
        <FooterLogo>
          <RychlejsieLogo width={163} accent="#fff" ink="#fff" />
        </FooterLogo>
        poskytuje Scholtz &amp; Company, j.s.a. v spolupráci so
        <PartnerLogo>
          <SrdcomLogo />
        </PartnerLogo>
      </Footer>
      <CityRibbon>Galanta</CityRibbon>
    </Page>
  );
}
